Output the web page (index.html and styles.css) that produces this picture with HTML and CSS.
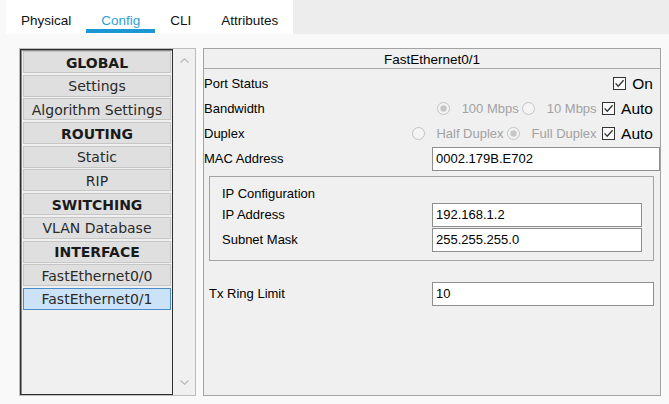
FILE: index.html
```html
<!DOCTYPE html>
<html>
<head>
<meta charset="utf-8">
<link rel="stylesheet" href="styles.css">
</head>
<body>
<div class="tabbar">
  <div class="tabs">
    <div class="tab">Physical</div>
    <div class="tab active">Config</div>
    <div class="tab">CLI</div>
    <div class="tab">Attributes</div>
  </div>
  <div class="tabbar-rest"></div>
</div>
<div class="content">
  <div class="sidebar">
    <div class="list">
      <div class="item head">GLOBAL</div>
      <div class="item">Settings</div>
      <div class="item">Algorithm Settings</div>
      <div class="item head">ROUTING</div>
      <div class="item">Static</div>
      <div class="item">RIP</div>
      <div class="item head">SWITCHING</div>
      <div class="item">VLAN Database</div>
      <div class="item head">INTERFACE</div>
      <div class="item">FastEthernet0/0</div>
      <div class="item selected">FastEthernet0/1</div>
    </div>
    <div class="scrollbar">
      <svg class="chev" width="9" height="5" viewBox="0 0 9 5"><path d="M0.5 4.5 L4.5 0.8 L8.5 4.5" fill="none" stroke="#b8b8b8" stroke-width="1.2"/></svg>
      <svg class="chev" width="9" height="5" viewBox="0 0 9 5"><path d="M0.5 0.5 L4.5 4.2 L8.5 0.5" fill="none" stroke="#b8b8b8" stroke-width="1.2"/></svg>
    </div>
  </div>
  <div class="panel">
    <div class="panel-title">FastEthernet0/1</div>
    <div class="row">
      <span class="label">Port Status</span>
      <span class="opts">
        <span class="opt check"><svg width="13" height="13" viewBox="0 0 13 13"><rect x="0.5" y="0.5" width="12" height="12" fill="#fafafa" stroke="#333"/><path d="M2.6 6.4 L5.2 9.2 L10.6 3.2" fill="none" stroke="#333" stroke-width="1.3"/></svg>On</span>
      </span>
    </div>
    <div class="row">
      <span class="label">Bandwidth</span>
      <span class="opts">
        <span class="opt radio disabled"><svg width="13" height="13" viewBox="0 0 13 13"><circle cx="6.5" cy="6.5" r="6" fill="#f4f4f4" stroke="#c2c2c2"/><circle cx="6.5" cy="6.5" r="3.2" fill="#c6c6c6"/></svg>100 Mbps</span>
        <span class="opt radio disabled"><svg width="13" height="13" viewBox="0 0 13 13"><circle cx="6.5" cy="6.5" r="6" fill="#f4f4f4" stroke="#c2c2c2"/></svg>10 Mbps</span>
        <span class="opt check"><svg width="13" height="13" viewBox="0 0 13 13"><rect x="0.5" y="0.5" width="12" height="12" fill="#fafafa" stroke="#333"/><path d="M2.6 6.4 L5.2 9.2 L10.6 3.2" fill="none" stroke="#333" stroke-width="1.3"/></svg>Auto</span>
      </span>
    </div>
    <div class="row">
      <span class="label">Duplex</span>
      <span class="opts">
        <span class="opt radio disabled"><svg width="13" height="13" viewBox="0 0 13 13"><circle cx="6.5" cy="6.5" r="6" fill="#f4f4f4" stroke="#c2c2c2"/></svg>Half Duplex</span>
        <span class="opt radio disabled"><svg width="13" height="13" viewBox="0 0 13 13"><circle cx="6.5" cy="6.5" r="6" fill="#f4f4f4" stroke="#c2c2c2"/><circle cx="6.5" cy="6.5" r="3.2" fill="#c6c6c6"/></svg>Full Duplex</span>
        <span class="opt check"><svg width="13" height="13" viewBox="0 0 13 13"><rect x="0.5" y="0.5" width="12" height="12" fill="#fafafa" stroke="#333"/><path d="M2.6 6.4 L5.2 9.2 L10.6 3.2" fill="none" stroke="#333" stroke-width="1.3"/></svg>Auto</span>
      </span>
    </div>
    <div class="row">
      <span class="label">MAC Address</span>
      <div class="input mac">0002.179B.E702</div>
    </div>
    <div class="fieldset">
      <div class="legend">IP Configuration</div>
      <div class="frow">
        <span class="label">IP Address</span>
        <div class="input ip">192.168.1.2</div>
      </div>
      <div class="frow">
        <span class="label">Subnet Mask</span>
        <div class="input ip">255.255.255.0</div>
      </div>
    </div>
    <div class="row txrow">
      <span class="label">Tx Ring Limit</span>
      <div class="input tx">10</div>
    </div>
  </div>
</div>
</body>
</html>
```
FILE: styles.css
```css
html, body {
  margin: 0;
  padding: 0;
}
body {
  width: 669px;
  height: 404px;
  overflow: hidden;
  background: #f9f9f9;
  font-family: "Liberation Sans", Arial, sans-serif;
  font-size: 13px;
  color: #000;
}
.tabbar {
  display: flex;
  height: 34px;
}
.tabs {
  display: flex;
  margin-left: 6px;
  background: #ffffff;
}
.tabbar-rest {
  flex: 1;
  background: #ededed;
}
.tab {
  position: relative;
  height: 34px;
  box-sizing: border-box;
  padding: 6px 15px 0;
  display: flex;
  align-items: center;
  font-size: 13.5px;
  color: #111;
}
.tab.active {
  color: #2d9fd9;
}
.tab.active::after {
  content: "";
  position: absolute;
  left: 0;
  right: 0;
  bottom: 1px;
  height: 4px;
  background: #1b97d4;
}
.content {
  display: flex;
  gap: 7px;
  padding: 14px 0 0 19px;
}
.sidebar {
  width: 177px;
  height: 348px;
  box-sizing: border-box;
  border: 1px solid #bdbdbd;
  background: #f0f0f0;
  display: flex;
}
.list {
  width: 153px;
  box-sizing: border-box;
  border: 1px solid #2e2e2e;
  box-shadow: inset 1px 1px 0 #8a8a8a;
  padding: 1px 1px 0 2px;
  display: flex;
  flex-direction: column;
  gap: 1.7px;
  background: #f0f0f0;
}
.item {
  height: 22px;
  box-sizing: border-box;
  border: 1px solid #c6c6c6;
  background: #dfdfdf;
  padding-top: 1px;
  display: flex;
  align-items: center;
  justify-content: center;
  font-family: "DejaVu Sans", Verdana, sans-serif;
  font-size: 14px;
  color: #2a2a2a;
  white-space: nowrap;
}
.item.head {
  font-weight: bold;
  color: #1a1a1a;
}
.item.selected {
  background: #cce3f7;
  border-color: #4a8bc8;
}
.scrollbar {
  flex: 1;
  display: flex;
  flex-direction: column;
  align-items: center;
  justify-content: space-between;
  padding: 9px 0 10px;
}
.chev {
  display: block;
}
.panel {
  width: 458px;
  height: 348px;
  box-sizing: border-box;
  border: 1px solid #a3a3a3;
  background: #f0f0f0;
}
.panel-title {
  height: 20px;
  box-sizing: border-box;
  border-bottom: 1px solid #a8a8a8;
  display: flex;
  align-items: center;
  justify-content: center;
  font-size: 13.5px;
  padding-top: 1px;
}
.row {
  height: 25px;
  display: flex;
  align-items: center;
}
.panel-title + .row {
  margin-top: 2px;
}
.label {
  white-space: nowrap;
}
.opts {
  margin-left: auto;
  padding-right: 7px;
  display: flex;
  align-items: center;
}
.opt {
  display: inline-flex;
  align-items: center;
  white-space: nowrap;
}
.opt svg {
  display: block;
  flex: none;
}
.opt.radio svg {
  margin-right: 11.5px;
}
.opt.radio + .opt {
  margin-left: 3.5px;
}
.opt.check {
  font-size: 15.5px;
}
.opt.check svg {
  margin-right: 6px;
}
.opt.radio + .opt.check {
  margin-left: 5.5px;
}
.opt.disabled {
  color: #a2a2a2;
}
.input {
  height: 24px;
  box-sizing: border-box;
  border: 1px solid #8e8e8e;
  background: #fff;
  padding-left: 3px;
  display: flex;
  align-items: center;
  margin-left: auto;
}
.input.mac {
  width: 228px;
}
.fieldset {
  width: 445px;
  box-sizing: border-box;
  margin: 5px 0 0 5px;
  border: 1px solid #a3a3a3;
  padding: 8px 11px 8px 12px;
}
.legend {
  height: 17px;
  display: flex;
  align-items: center;
}
.frow {
  height: 25px;
  display: flex;
  align-items: center;
}
.input.ip {
  width: 210px;
}
.txrow {
  margin: 20px 0 0 5px;
  width: 445px;
}
.input.tx {
  width: 222px;
}
```
